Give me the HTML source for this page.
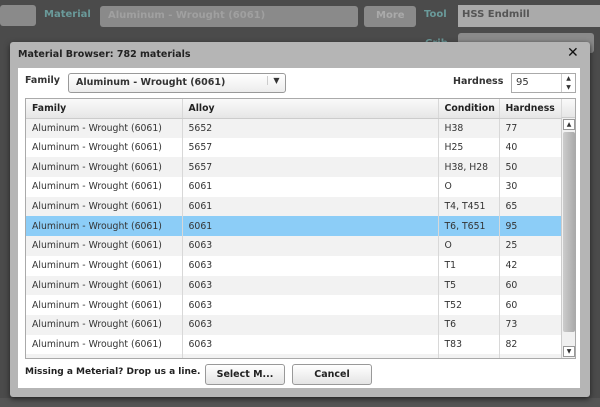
<!DOCTYPE html>
<html><head><style>
*{box-sizing:border-box;margin:0;padding:0}
body{width:600px;height:407px;overflow:hidden;background:#4b4b4b;font-family:"DejaVu Sans","Liberation Sans",sans-serif;font-size:10px;color:#333;position:relative}
.a{position:absolute}
.bgt{color:#6a9a9a;font-weight:bold;font-size:10px}
.bgbox{background:#8a8a8a;border-radius:3px}
.dlg{left:10px;top:42px;width:580px;height:355px;background:#b5b5b5;border-radius:3px;box-shadow:0 2px 6px #222}
.title{left:18px;top:49px;font-weight:bold;font-size:9.5px;color:#222}
.panel{left:18px;top:68px;width:562px;height:320px;background:#fff}
table{border-collapse:collapse;table-layout:fixed}
td,th{height:19.7px;padding:0 0 0 6px;text-align:left;border-left:1px solid #d8d8d8;font-size:9.3px;white-space:nowrap;overflow:hidden}
th{background:linear-gradient(#fafafa,#e6e6e6);font-weight:bold;color:#222;height:19px;border-bottom:1px solid #ccc}
tr:nth-child(even) td{background:#f2f2f2}
tr.sel td{background:#8ccdf7!important}
.btn{border:1px solid #999;border-radius:3px;background:linear-gradient(#fff,#e4e4e4);font-weight:bold;font-size:9.5px;text-align:center;line-height:19px;color:#222}
</style></head><body>
<div class="a bgbox" style="left:0;top:5px;width:36px;height:21px"></div>
<div class="a bgt" style="left:44px;top:9px">Material</div>
<div class="a bgbox" style="left:100px;top:6px;width:258px;height:21px;color:#a0a0a0;font-weight:bold;padding:4px 8px">Aluminum - Wrought (6061)</div>
<div class="a bgbox" style="left:364px;top:6px;width:52px;height:21px;color:#aaa;font-weight:bold;padding:4px 12px">More</div>
<div class="a bgt" style="left:424px;top:9px">Tool</div>
<div class="a" style="left:458px;top:5px;width:142px;height:22px;background:#aaa;padding:4px 4px;font-weight:bold;color:#555">HSS Endmill</div>
<div class="a bgt" style="left:425px;top:38px">Crib</div>
<div class="a bgbox" style="left:458px;top:33px;width:136px;height:20px"></div>
<div class="a" style="left:0;top:398px;width:600px;height:9px;background:#555"></div>
<div class="a dlg"></div>
<div class="a title">Material Browser: 782 materials</div>
<div class="a" style="left:567px;top:45px;font-size:14px;font-weight:bold;color:#111">✕</div>
<div class="a panel"></div>
<div class="a" style="left:25px;top:75px;font-weight:bold;font-size:9.5px">Family</div>
<div class="a" style="left:68px;top:73px;width:218px;height:20px;border:1px solid #999;border-radius:3px;background:linear-gradient(#fff,#ececec);font-weight:bold;padding:3px 7px;font-size:9.5px">Aluminum - Wrought (6061)<span style="position:absolute;right:0;top:2px;width:18px;border-left:1px solid #ccc;text-align:center;font-size:8px">▼</span></div>
<div class="a" style="left:453px;top:76px;font-weight:bold;font-size:9.5px">Hardness</div>
<div class="a" style="left:511px;top:73px;width:65px;height:20px;border:1px solid #aaa;padding:3px 4px">95<span style="position:absolute;right:0;top:0;width:14px;height:18px;border-left:1px solid #ccc;font-size:6px;line-height:9px;text-align:center">▲<br>▼</span></div>
<div class="a" style="left:25px;top:98px;width:551px;height:261px;border:1px solid #aaa;overflow:hidden">
<table style="width:535px">
<colgroup><col style="width:156px"><col style="width:256px"><col style="width:61px"><col style="width:62px"></colgroup>
<tr><th style="border-left:0">Family</th><th>Alloy</th><th>Condition</th><th>Hardness</th></tr>
<tr><td style="border-left:0">Aluminum - Wrought (6061)</td><td>5652</td><td>H38</td><td>77</td></tr>
<tr><td style="border-left:0">Aluminum - Wrought (6061)</td><td>5657</td><td>H25</td><td>40</td></tr>
<tr><td style="border-left:0">Aluminum - Wrought (6061)</td><td>5657</td><td>H38, H28</td><td>50</td></tr>
<tr><td style="border-left:0">Aluminum - Wrought (6061)</td><td>6061</td><td>O</td><td>30</td></tr>
<tr><td style="border-left:0">Aluminum - Wrought (6061)</td><td>6061</td><td>T4, T451</td><td>65</td></tr>
<tr class="sel"><td style="border-left:0">Aluminum - Wrought (6061)</td><td>6061</td><td>T6, T651</td><td>95</td></tr>
<tr><td style="border-left:0">Aluminum - Wrought (6061)</td><td>6063</td><td>O</td><td>25</td></tr>
<tr><td style="border-left:0">Aluminum - Wrought (6061)</td><td>6063</td><td>T1</td><td>42</td></tr>
<tr><td style="border-left:0">Aluminum - Wrought (6061)</td><td>6063</td><td>T5</td><td>60</td></tr>
<tr><td style="border-left:0">Aluminum - Wrought (6061)</td><td>6063</td><td>T52</td><td>60</td></tr>
<tr><td style="border-left:0">Aluminum - Wrought (6061)</td><td>6063</td><td>T6</td><td>73</td></tr>
<tr><td style="border-left:0">Aluminum - Wrought (6061)</td><td>6063</td><td>T83</td><td>82</td></tr>
<tr><td style="border-left:0"></td><td></td><td></td><td></td></tr>
</table>
<div class="a" style="left:535px;top:0;width:15px;height:19px;border-left:1px solid #d8d8d8;background:linear-gradient(#fafafa,#e6e6e6);border-bottom:1px solid #ccc"></div>
<div class="a" style="left:535px;top:19px;width:15px;height:241px;background:#f0f0f0;border-left:1px solid #ccc">
<div class="a" style="left:1px;top:1px;width:12px;height:11px;border:1px solid #999;background:#fff;font-size:6px;text-align:center;line-height:9px">▲</div>
<div class="a" style="left:1px;top:14px;width:12px;height:200px;background:linear-gradient(90deg,#ccc,#aaa);border-radius:2px"></div>
<div class="a" style="left:1px;top:228px;width:12px;height:11px;border:1px solid #999;background:#fff;font-size:6px;text-align:center;line-height:9px">▼</div>
</div>
</div>
<div class="a" style="left:25px;top:367px;font-weight:bold;font-size:9px;color:#222">Missing a Meterial? Drop us a line.</div>
<div class="a btn" style="left:205px;top:364px;width:80px;height:21px">Select M...</div>
<div class="a btn" style="left:292px;top:364px;width:80px;height:21px">Cancel</div>
</body></html>
